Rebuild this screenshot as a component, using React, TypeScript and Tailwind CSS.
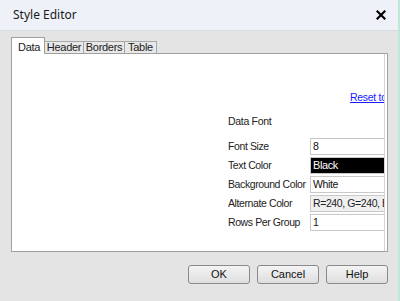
// Style Editor dialog — Data tab open, settings column pinned to the right and clipped by the panel edge.
const TABS: { name: string; w: string }[] = [
  { name: 'Data', w: 'w-[34px]' },
  { name: 'Header', w: 'w-[39px]' },
  { name: 'Borders', w: 'w-[41px]' },
  { name: 'Table', w: 'w-[32px]' },
];

const FIELDS: { label: string; value: string; tone: 'plain' | 'dark' | 'muted' }[] = [
  { label: 'Font Size', value: '8', tone: 'plain' },
  { label: 'Text Color', value: 'Black', tone: 'dark' },
  { label: 'Background Color', value: 'White', tone: 'plain' },
  { label: 'Alternate Color', value: 'R=240, G=240, B=240', tone: 'muted' },
  { label: 'Rows Per Group', value: '1', tone: 'plain' },
];

const FONT = { fontFamily: '"Liberation Sans", Arial, sans-serif' };

function CloseIcon() {
  return (
    <svg width="10" height="10" viewBox="0 0 10 10" aria-hidden>
      <path d="M1.5 1.5 L8.5 8.5 M8.5 1.5 L1.5 8.5" stroke="#000" strokeWidth="2.2" strokeLinecap="square" />
    </svg>
  );
}

function DialogButton({ children }: { children: string }) {
  return (
    <button className="h-[19px] w-[62px] rounded-[3px] border border-[#8a8a8a] bg-gradient-to-b from-[#f4f4f4] to-[#dedede] text-[11px] text-[#111]">
      {children}
    </button>
  );
}

export default function App() {
  return (
    <div className="flex h-[301px] w-[400px] overflow-hidden text-[#222]" style={FONT}>
      <div className="flex w-[398px] flex-col">
        <header className="flex h-[31px] shrink-0 items-center justify-between border-b border-[#d8dde4] bg-[#eef2f8] pl-[13px] pr-[12px]">
          <span className="text-[12px] text-[#1a1a1a]" style={{ fontFamily: '"Noto Sans", "Open Sans", sans-serif' }}>
            Style Editor
          </span>
          <CloseIcon />
        </header>

        <div className="flex flex-1 flex-col bg-[#e4e4e4] pl-[11px] pt-[6px]">
          <nav className="flex h-[16px] items-end text-[11px] tracking-[-0.3px]">
            {TABS.map((t, i) =>
              i === 0 ? (
                <span key={t.name} className={`relative z-10 -mb-px flex h-[17px] ${t.w} items-start border border-b-0 border-[#a0a0a0] bg-white pl-[6px] pt-px`}>
                  {t.name}
                </span>
              ) : (
                <span key={t.name} className={`flex h-[12px] ${t.w} items-center justify-center border border-b-0 border-l-0 border-[#a8a8a8] bg-[#e8e8e8] text-[#222]`}>
                  {t.name}
                </span>
              ),
            )}
          </nav>

          <section className="h-[199px] w-[377px] border border-[#a0a0a0] bg-white pr-[2px]">
            <div className="h-full w-full overflow-hidden border-r border-[#d4d4d4]">
              <div className="ml-[216px] flex w-[220px] flex-col whitespace-nowrap pt-[36px] text-[11px] tracking-[-0.3px]">
                <a className="ml-[122px] h-[14px] text-[10.5px] text-[#1a1aff] underline">Reset to defaults</a>
                <span className="mt-[10px] h-[14px] text-[10.5px]">Data Font</span>
                <div className="mt-[9px] flex flex-col text-[10.5px] tracking-[-0.4px]">
                  {FIELDS.map((f) => (
                    <div key={f.label} className="flex h-[19px] items-center">
                      <span className="w-[82px] shrink-0 overflow-hidden">{f.label}</span>
                      <span
                        className={
                          'flex h-[17px] w-[120px] shrink-0 items-center border border-[#c8c8c8] pl-[2px] ' +
                          (f.tone === 'dark' ? 'bg-black text-[11px] text-white' : f.tone === 'muted' ? 'bg-[#f0f0f0] text-[#222]' : 'bg-white text-[#111]')
                        }
                      >
                        {f.value}
                      </span>
                    </div>
                  ))}
                </div>
              </div>
            </div>
          </section>

          <footer className="flex justify-end gap-[7px] pr-[10px] pt-[13px]">
            <DialogButton>OK</DialogButton>
            <DialogButton>Cancel</DialogButton>
            <DialogButton>Help</DialogButton>
          </footer>
        </div>
      </div>
      <div className="w-[2px] bg-[#bfe8d8]" />
    </div>
  );
}
